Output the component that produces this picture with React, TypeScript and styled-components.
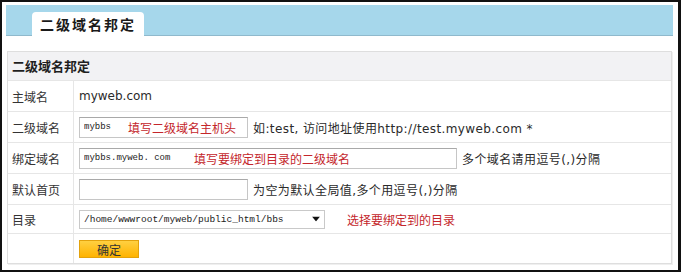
import styled, { createGlobalStyle } from 'styled-components';

const GlobalStyle = createGlobalStyle`
  html, body {
    margin: 0;
    padding: 0;
    background: #fff;
  }
  body {
    font-family: "DejaVu Sans", "Noto Sans CJK SC", sans-serif;
    font-size: 12px;
    color: #333;
  }
`;

const Frame = styled.div`
  box-sizing: border-box;
  width: 681px;
  height: 272px;
  border: 2px solid #111;
  border-right-width: 3px;
  padding: 3px 5px 0 4px;
  background: #fff;
`;

const TabBar = styled.div`
  display: flex;
  align-items: flex-end;
  height: 30px;
  padding-left: 26px;
  background: #a6d7eb;
  border-bottom: 1px solid #8fb9cc;
`;

const Tab = styled.div`
  display: flex;
  align-items: center;
  justify-content: center;
  width: 112px;
  height: 24px;
  margin-bottom: -1px;
  background: #fff;
  border-radius: 4px 4px 0 0;
  font-family: "Noto Sans CJK SC", sans-serif;
  font-size: 14px;
  font-weight: bold;
  letter-spacing: 2px;
  color: #1a1a1a;
`;

const Panel = styled.div`
  margin: 15px 1px 0 1px;
  border: 1px solid #dedede;
  box-shadow: 1px 1px 0 #efefef;
`;

const PanelHead = styled.div`
  height: 28px;
  line-height: 28px;
  padding-left: 4px;
  background: #f2f2f4;
  font-family: "Noto Sans CJK SC", sans-serif;
  font-size: 13px;
  font-weight: bold;
  color: #1f1f1f;
`;

const Row = styled.div<{ $h: number }>`
  box-sizing: border-box;
  display: grid;
  grid-template-columns: 66px 1fr;
  height: ${(p) => p.$h}px;
  border-top: 1px solid #e6e6e6;
`;

const Label = styled.div`
  box-sizing: border-box;
  display: flex;
  align-items: center;
  padding-left: 4px;
  border-right: 1px solid #e6e6e6;
  font-family: "Noto Sans CJK SC", sans-serif;
  font-size: 12px;
  color: #333;
`;

const Value = styled.div`
  display: flex;
  align-items: center;
  gap: 5px;
  padding-left: 5px;
  color: #2a2a2a;
  white-space: nowrap;
`;

const Field = styled.div`
  position: relative;
  display: inline-flex;
`;

const TextBox = styled.input<{ $w: number }>`
  box-sizing: border-box;
  width: ${(p) => p.$w}px;
  height: 21px;
  margin: 0;
  padding: 0 4px;
  border: 1px solid #c6c6c6;
  border-top-color: #a9a9a9;
  background: #fff;
  font-family: "Liberation Mono", monospace;
  font-size: 9px;
  color: #222;
  outline: none;
`;

const Hint = styled.span<{ $left?: number }>`
  position: ${(p) => (p.$left !== undefined ? 'absolute' : 'static')};
  left: ${(p) => p.$left ?? 0}px;
  top: 50%;
  transform: ${(p) => (p.$left !== undefined ? 'translateY(-50%)' : 'none')};
  margin-left: ${(p) => (p.$left !== undefined ? 0 : 17)}px;
  font-family: "Noto Sans CJK SC", sans-serif;
  font-size: 12px;
  color: #c4262b;
  pointer-events: none;
`;

const Note = styled.span`
  font-family: "DejaVu Sans", "Noto Sans CJK SC", sans-serif;
  font-size: 12px;
  letter-spacing: 0.4px;
  color: #2a2a2a;
`;

const Select = styled.select`
  box-sizing: border-box;
  width: 246px;
  height: 19px;
  margin: 0;
  padding: 0 18px 0 4px;
  appearance: none;
  border: 1px solid #c9c9c9;
  background: #fff;
  font-family: "Liberation Mono", monospace;
  font-size: 9.5px;
  color: #222;
  outline: none;
`;

const Arrow = styled.svg`
  position: absolute;
  right: 5px;
  top: 50%;
  transform: translateY(-50%);
  pointer-events: none;
`;

const Button = styled.button`
  box-sizing: border-box;
  width: 60px;
  height: 18px;
  padding: 0;
  border: 1px solid #e3a20c;
  background: linear-gradient(#ffd041, #ffb300);
  font-family: "Noto Sans CJK SC", sans-serif;
  font-size: 12px;
  color: #333;
`;

export default function App() {
  return (
    <>
      <GlobalStyle />
      <Frame>
        <TabBar>
          <Tab>二级域名邦定</Tab>
        </TabBar>
        <Panel>
          <PanelHead>二级域名邦定</PanelHead>
          <Row $h={31}>
            <Label>主域名</Label>
            <Value>myweb.com</Value>
          </Row>
          <Row $h={31}>
            <Label>二级域名</Label>
            <Value>
              <Field>
                <TextBox $w={169} defaultValue="mybbs" />
                <Hint $left={49}>填写二级域名主机头</Hint>
              </Field>
              <Note>如:test, 访问地址使用http://test.myweb.com *</Note>
            </Value>
          </Row>
          <Row $h={31}>
            <Label>绑定域名</Label>
            <Value>
              <Field>
                <TextBox $w={378} defaultValue="mybbs.myweb. com" />
                <Hint $left={115}>填写要绑定到目录的二级域名</Hint>
              </Field>
              <Note>多个域名请用逗号(,)分隔</Note>
            </Value>
          </Row>
          <Row $h={31}>
            <Label>默认首页</Label>
            <Value>
              <TextBox $w={169} defaultValue="" />
              <Note>为空为默认全局值,多个用逗号(,)分隔</Note>
            </Value>
          </Row>
          <Row $h={29}>
            <Label>目录</Label>
            <Value>
              <Field>
                <Select defaultValue="bbs">
                  <option value="bbs">/home/wwwroot/myweb/public_html/bbs</option>
                </Select>
                <Arrow width="8" height="5" viewBox="0 0 8 5">
                  <path d="M0 0h8L4 5z" fill="#111" />
                </Arrow>
              </Field>
              <Hint>选择要绑定到的目录</Hint>
            </Value>
          </Row>
          <Row $h={30}>
            <Label />
            <Value>
              <Button type="button">确定</Button>
            </Value>
          </Row>
        </Panel>
      </Frame>
    </>
  );
}
